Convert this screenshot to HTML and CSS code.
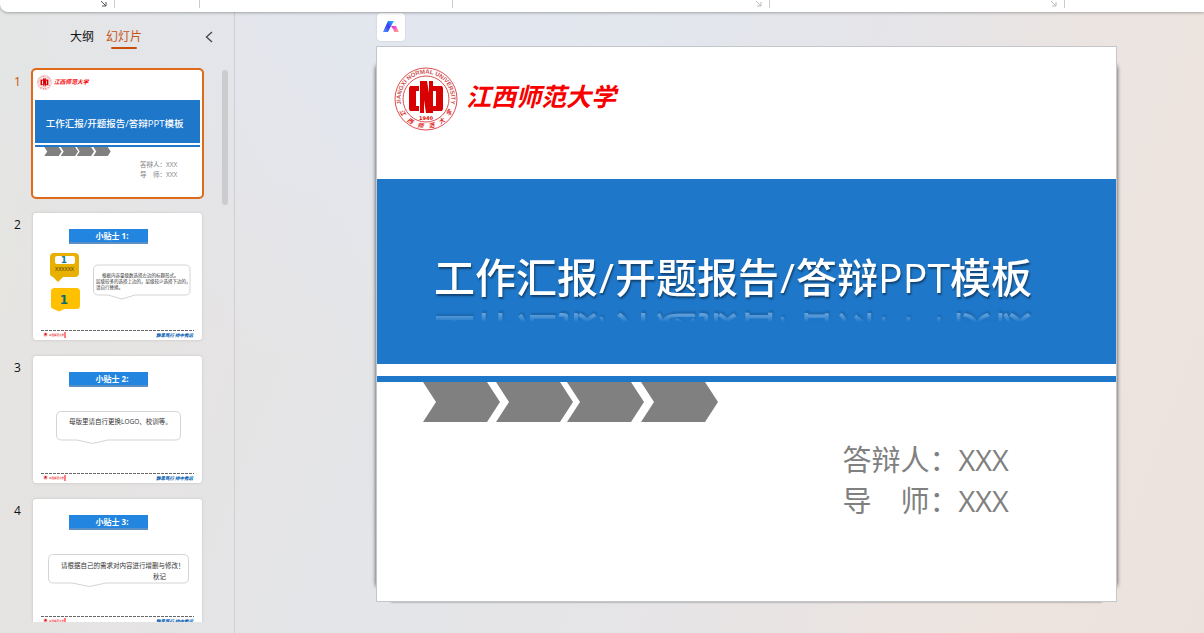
FILE: index.html
```html
<!DOCTYPE html>
<html lang="zh-CN">
<head>
    <meta charset="UTF-8">
    <meta name="viewport" content="width=device-width, initial-scale=1.0">
    <title>工作汇报/开题报告/答辩PPT模板</title>
    <link rel="stylesheet" href="styles.css">
</head>
<body>
    <!-- shared drawings -->
    <svg class="defs" aria-hidden="true">
        <symbol id="seal" viewBox="0 0 64 64">
            <path id="arc-top" d="M8 40 A25.300 25.300 0 1 1 56 40" fill="none"/>
            <path id="arc-bottom" d="M4.500 42 A29.300 29.300 0 0 0 59.500 42" fill="none"/>
            <circle cx="32" cy="32" r="31" fill="#fff" stroke="#dc5050" stroke-width="1"/>
            <circle cx="32" cy="32" r="23" fill="none" stroke="#dc5050" stroke-width="1"/>
            <text class="seal-latin"><textPath href="#arc-top" startOffset="50%">JIANGXI NORMAL UNIVERSITY</textPath></text>
            <text class="seal-han"><textPath href="#arc-bottom" startOffset="50%">江　西　师　范　大　学</textPath></text>
            <path fill="#d80000" d="M16 19h9v5h-3v15h3v5h-9l-1-2V21zM48 19h-9v5h3v15h-3v5h9l1-2V21zM26 14h7l2 12V14h4v32h-7l-2-13v13h-4z"/>
            <text class="seal-year" x="32" y="53">1940</text>
        </symbol>
        <symbol id="logo" viewBox="0 0 232 64">
            <use href="#seal" width="64" height="64"/>
            <text class="logo-name" x="72" y="39">江西师范大学</text>
        </symbol>
        <symbol id="arrows" viewBox="0 0 295 40">
            <path fill="#808080" d="M0 0H64L77 20 64 40H0L13 20zM73 0h64l13 20-13 20H73l13-20zM144 0h64l13 20-13 20h-64l13-20zM218 0h64l13 20-13 20h-64l13-20z"/>
        </symbol>
        <symbol id="master" viewBox="0 0 676 508">
            <rect x="144" y="64" width="316" height="60" fill="#2285e0"/>
            <rect x="144" y="116" width="316" height="8" fill="#5c8fc4"/>
            <path d="M32 470H644" stroke="#666" stroke-width="4" stroke-dasharray="12 4"/>
            <use href="#seal" x="40" y="476" width="20" height="20"/>
            <text class="foot-name" x="64" y="491">江西师范大学</text>
            <rect x="126" y="476" width="4" height="24" fill="#f00"/>
            <text class="foot-motto" x="492" y="495">静思笃行 持中秀远</text>
        </symbol>
        <symbol id="launcher" viewBox="0 0 7 7">
            <path d="M1 1l5 5M6 2v4H2" fill="none" stroke="currentColor"/>
        </symbol>
    </svg>

    <header class="ribbon">
        <div class="group clipboard"><button class="launch dark" aria-label="剪贴板"><svg><use href="#launcher"/></svg></button></div>
        <div class="group slides"></div>
        <div class="group font"></div>
        <div class="group paragraph"><button class="launch" aria-label="段落"><svg><use href="#launcher"/></svg></button></div>
        <div class="group drawing"><button class="launch" aria-label="绘图"><svg><use href="#launcher"/></svg></button></div>
    </header>

    <main class="workspace">
        <aside class="sidebar">
            <nav class="tabs">
                <button class="tab">大纲</button>
                <button class="tab active">幻灯片</button>
                <button class="collapse" aria-label="收起">
                    <svg viewBox="0 0 8 12"><path d="M7 1L1.500 6 7 11" fill="none" stroke="#444" stroke-width="1.300"/></svg>
                </button>
            </nav>
            <div class="thumbs">
                <ol class="thumb-list">
                    <li class="thumb selected">
                        <span class="num">1</span>
                        <svg class="card" viewBox="0 0 676 508">
                            <use href="#logo" x="16" y="20" width="216" height="60"/>
                            <rect x="8" y="120" width="660" height="172" fill="#1e77c9"/>
                            <rect x="8" y="300" width="660" height="8" fill="#1e77c9"/>
                            <text class="t-cover" x="51" y="227">工作汇报/开题报告/答辩PPT模板</text>
                            <use href="#arrows" x="44" y="308" width="268" height="36"/>
                            <text class="t-names" x="428" y="388">答辩人：XXX</text>
                            <text class="t-names" x="428" y="426">导　师：XXX</text>
                        </svg>
                    </li>
                    <li class="thumb">
                        <span class="num">2</span>
                        <svg class="card" viewBox="0 0 676 508">
                            <use href="#master"/>
                            <text class="t-title" x="316" y="105">小贴士 1:</text>
                            <path fill="#e8b000" d="M84 160h84q16 0 16 16v64q0 16-16 16h-48l-20 20-20-20q-12-2-12-16v-64q0-16 16-16z"/>
                            <rect x="88" y="172" width="80" height="32" rx="8" fill="#fff"/>
                            <text class="t-one" x="124" y="200">1</text>
                            <text class="t-xs" x="126" y="232">XXXXXX</text>
                            <path fill="#ffc000" d="M86 300h88q14 0 14 14v56q0 14-14 14h-48l-22 10-22-10q-10-2-10-14v-56q0-14 14-14z"/>
                            <text class="t-one big" x="124" y="364">1</text>
                            <path class="bubble" d="M262 208h346q20 0 20 20v80q0 20-20 20H408l-52 16-56-16h-38q-20 0-20-20v-80q0-20 20-20z"/>
                            <text class="t-small" x="276" y="255">根据内容量级数选择左边的标题形式。</text>
                            <text class="t-small" x="252" y="279">层级较多的选择上边的，层级较少选择下边的，</text>
                            <text class="t-small" x="252" y="303">请自行替换。</text>
                        </svg>
                    </li>
                    <li class="thumb">
                        <span class="num">3</span>
                        <svg class="card" viewBox="0 0 676 508">
                            <use href="#master"/>
                            <text class="t-title" x="316" y="105">小贴士 2:</text>
                            <path class="bubble" d="M114 222h456q20 0 20 20v74q0 20-20 20H300l-62 14-62-14h-62q-20 0-20-20v-74q0-20 20-20z"/>
                            <text class="t-body" x="144" y="272">母版里请自行更换LOGO、校训等。</text>
                        </svg>
                    </li>
                    <li class="thumb">
                        <span class="num">4</span>
                        <svg class="card" viewBox="0 0 676 508">
                            <use href="#master"/>
                            <text class="t-title" x="316" y="105">小贴士 3:</text>
                            <path class="bubble" d="M82 222h520q20 0 20 20v74q0 20-20 20H292l-66 14-70-14H82q-20 0-20-20v-74q0-20 20-20z"/>
                            <text class="t-body" x="112" y="274">请根据自己的需求对内容进行增删与修改！</text>
                            <text class="t-body" x="480" y="320">秋记</text>
                        </svg>
                    </li>
                </ol>
                <div class="scrollbar"></div>
            </div>
        </aside>

        <section class="editor">
            <button class="ai" aria-label="AI">
                <svg viewBox="0 0 16 12">
                    <defs>
                        <linearGradient id="ai-blue" x1="0" y1="1" x2="1" y2="0">
                            <stop offset="0" stop-color="#4a9bff"/><stop offset=".5" stop-color="#3a3af0"/><stop offset="1" stop-color="#20c8ff"/>
                        </linearGradient>
                        <linearGradient id="ai-pink" x1="0" y1="0" x2="1" y2="1">
                            <stop offset="0" stop-color="#e41cf0"/><stop offset="1" stop-color="#ffb080"/>
                        </linearGradient>
                    </defs>
                    <path fill="url(#ai-blue)" d="M5 0h6L8 5 5 11H0z"/>
                    <path fill="url(#ai-pink)" d="M8 5h5l3 6h-4.500L10 8z"/>
                </svg>
            </button>
            <article class="slide">
                <div class="slide-head">
                    <svg class="slide-logo" role="img" aria-label="江西师范大学"><use href="#logo"/></svg>
                </div>
                <div class="band">
                    <h1>工作汇报<span>/</span>开题报告<span>/</span>答辩PPT模板</h1>
                </div>
                <div class="rule"></div>
                <svg class="arrows"><use href="#arrows"/></svg>
                <div class="names">
                    <p>答辩人：XXX</p>
                    <p>导　师：XXX</p>
                </div>
            </article>
        </section>
    </main>
</body>
</html>
```
FILE: styles.css
```css
* {
    box-sizing: border-box;
}
body {
    margin: 0;
    height: 100vh;
    display: flex;
    flex-direction: column;
    overflow: hidden;
    font-family: "Open Sans", "Noto Sans CJK SC", sans-serif;
    background:
        radial-gradient(ellipse 50% 60% at 38% 0, #e2e7f0, rgba(226, 231, 240, 0)),
        linear-gradient(110deg, #e4e5e1 0%, #e6e3e3 20%, #e3e5e8 40%, #e6e4e6 62%, #ede4df 85%, #ece2dd 100%);
}
button {
    border: 0;
    padding: 0;
    background: none;
    font: inherit;
    cursor: pointer;
}
.defs {
    position: absolute;
    width: 0;
    height: 0;
}

/* ribbon */
.ribbon {
    display: flex;
    flex: none;
    height: 12px;
    padding-bottom: 4px;
    background: #fff;
    border-radius: 0 0 0 8px;
    box-shadow: 0 1px 3px rgba(0, 0, 0, 0.3);
    position: relative;
    z-index: 2;
}
.group {
    display: flex;
    justify-content: flex-end;
    border-right: 1px solid #ccc;
    padding-right: 7px;
}
.clipboard {
    width: 115px;
}
.slides {
    width: 85px;
}
.font {
    width: 253px;
}
.paragraph {
    width: 317px;
}
.drawing {
    width: 295px;
}
.launch {
    display: flex;
    color: #bbb;
}
.launch.dark {
    color: #555;
}
.launch svg {
    width: 7px;
    height: 7px;
}

/* sidebar */
.workspace {
    display: flex;
    flex: 1;
    min-height: 0;
}
.sidebar {
    display: flex;
    flex-direction: column;
    flex: none;
    width: 235px;
    border-right: 1px solid #cfcfd2;
    padding-bottom: 11px;
}
.tabs {
    display: flex;
    flex: none;
    gap: 12px;
    align-items: center;
    height: 50px;
    padding: 0 21px 0 70px;
}
.tab {
    position: relative;
    font-size: 12px;
    line-height: 24px;
    color: #111;
}
.tab.active {
    color: #c55311;
}
.tab.active::after {
    content: "";
    position: absolute;
    left: 5px;
    right: 5px;
    bottom: 0;
    height: 2px;
    border-radius: 1px;
    background: #c94f0c;
}
.collapse {
    display: flex;
    margin-left: auto;
}
.collapse svg {
    width: 8px;
    height: 12px;
}
.thumbs {
    display: flex;
    flex: 1;
    min-height: 0;
    overflow: hidden;
    padding-top: 8px;
}
.thumb-list {
    flex: 1;
    display: flex;
    flex-direction: column;
    gap: 16px;
    margin: 0;
    padding: 0;
    list-style: none;
}
.thumb {
    display: flex;
}
.num {
    width: 33px;
    padding-left: 14px;
    font-size: 12px;
    line-height: 24px;
    color: #111;
}
.card {
    width: 169px;
    height: 127px;
    background: #fff;
    border-radius: 3px;
    box-shadow: 0 0 3px rgba(0, 0, 0, 0.15);
}
.selected .num {
    color: #c55311;
}
.selected .card {
    outline: 2px solid #de6a1c;
}
.scrollbar {
    width: 6px;
    height: 135px;
    margin-right: 6px;
    border-radius: 3px;
    background: #cbcccd;
}

/* text inside the slide drawings */
.seal-latin {
    font: bold 6px "Liberation Sans", sans-serif;
    fill: #d05050;
    text-anchor: middle;
}
.seal-han {
    font: italic bold 6px "Noto Sans CJK SC", sans-serif;
    fill: #d22;
    text-anchor: middle;
}
.seal-year {
    font: bold 5px "DejaVu Sans", sans-serif;
    fill: #d00;
    text-anchor: middle;
}
.logo-name {
    font: italic 700 25px "Noto Sans CJK SC", sans-serif;
    fill: #f80000;
}
.foot-name {
    font: bold 10px "Noto Sans CJK SC", sans-serif;
    fill: #e22;
}
.foot-motto {
    font: italic 900 18px "Noto Sans CJK SC", sans-serif;
    fill: #0a5fb4;
}
.t-cover {
    font-size: 38px;
    font-weight: 500;
    fill: #fff;
}
.t-names {
    font-size: 26px;
    fill: #808080;
}
.t-title {
    font-size: 32px;
    font-weight: bold;
    fill: #fff;
    text-anchor: middle;
}
.t-one {
    font: bold 36px "DejaVu Sans", sans-serif;
    fill: #0a7fa0;
    text-anchor: middle;
}
.t-one.big {
    font-size: 48px;
    fill: #086a70;
}
.t-xs {
    font-size: 22px;
    fill: #4a3a00;
    text-anchor: middle;
}
.t-small {
    font-size: 18px;
    fill: #333;
}
.t-body {
    font-size: 26px;
    fill: #333;
}
.bubble {
    fill: #fff;
    stroke: #d4d4d4;
    stroke-width: 4;
}

/* editor */
.editor {
    flex: 1;
    min-width: 0;
    padding: 1px 87px 0 141px;
    position: relative;
    z-index: 1;
}
.ai {
    display: flex;
    align-items: center;
    justify-content: center;
    width: 28px;
    height: 28px;
    margin: 0 0 5px 1px;
    border-radius: 4px;
    background: #fff;
    box-shadow: 0 0 2px rgba(0, 0, 0, 0.15);
}
.ai svg {
    width: 16px;
    height: 12px;
}
.slide {
    position: relative;
    aspect-ratio: 741 / 556;
    background: #fff;
    border: 1px solid #c3c6cb;
}
.slide::before {
    content: "";
    position: absolute;
    z-index: -1;
    inset: 18px -1px 14px;
    border-radius: 4px;
    background: #444;
    filter: blur(2px);
}
.slide::after {
    content: "";
    position: absolute;
    z-index: -1;
    inset: auto 14px -1px;
    height: 8px;
    background: #777;
    filter: blur(1px);
}
.slide-head {
    height: 132px;
    padding: 20px 17px;
}
.slide-logo {
    display: block;
    width: 232px;
    height: 64px;
}
.band {
    height: 185px;
    padding: 68px 0 0 57px;
    background: #1e77c9;
}
.band h1 {
    margin: 0;
    font-size: 41px;
    font-weight: 500;
    line-height: 60px;
    color: #fff;
    white-space: nowrap;
    text-shadow: 1px 2px 2px rgba(0, 0, 0, 0.45);
    -webkit-box-reflect: below -4px linear-gradient(transparent 68%, rgba(0, 0, 0, 0.45) 88%);
}
.band h1 span {
    padding: 0 1px;
}
.rule {
    height: 6px;
    margin-top: 12px;
    background: #1e77c9;
}
.arrows {
    display: block;
    width: 295px;
    height: 40px;
    margin-left: 46px;
}
.names {
    padding: 17px 0 0 63%;
    font-size: 29px;
    line-height: 41px;
    color: #808080;
}
.names p {
    margin: 0;
}
```
